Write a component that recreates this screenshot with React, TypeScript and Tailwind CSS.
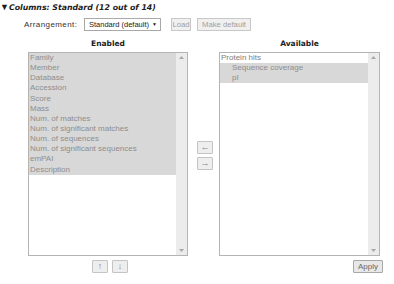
import React from "react";

const enabledItems = [
  "Family",
  "Member",
  "Database",
  "Accession",
  "Score",
  "Mass",
  "Num. of matches",
  "Num. of significant matches",
  "Num. of sequences",
  "Num. of significant sequences",
  "emPAI",
  "Description",
];

const arial = "font-['Liberation_Sans',Arial,sans-serif]";

const Scrollbar = () => (
  <div className="flex w-[11px] flex-col items-center justify-between bg-[#ececec] py-[3px]">
    <svg width="5" height="3" viewBox="0 0 5 3">
      <path d="M0 3 L2.5 0 L5 3 Z" fill="#a8a8a8" />
    </svg>
    <svg width="5" height="3" viewBox="0 0 5 3">
      <path d="M0 0 L2.5 3 L5 0 Z" fill="#a8a8a8" />
    </svg>
  </div>
);

const SmallButton = ({ children }: { children: React.ReactNode }) => (
  <button
    className={`flex h-[13px] w-[16px] items-center justify-center rounded-[1px] border border-[#c4c4c4] bg-[#eeeeee] text-[9px] leading-none text-[#8a8a8a] ${arial}`}
  >
    {children}
  </button>
);

export default function App() {
  return (
    <div className={`relative h-[284px] w-[394px] overflow-hidden bg-white ${arial}`}>
      {/* Title */}
      <div className="flex h-[14px] items-center pt-[1px] text-[#1c1c1c]">
        <span className="text-[9px] leading-none">▼</span>
        <span className="font-['DejaVu_Sans',Verdana,sans-serif] text-[7.8px] font-bold italic leading-none">
          Columns: Standard (12 out of 14)
        </span>
      </div>

      {/* Arrangement row */}
      <div className="mt-[4px] flex h-[13px] items-center pl-[24px]">
        <span className="w-[60px] text-[8px] tracking-[0.4px] text-[#333]">Arrangement:</span>
        <div className="flex h-[13px] w-[77px] items-center justify-between border border-[#a9a9a9] bg-white pl-[4px] pr-[3px] text-[7.5px] text-[#222]">
          <span>Standard (default)</span>
          <span className="text-[5px]">▼</span>
        </div>
        <button className="ml-[10px] flex h-[13px] w-[20px] items-center justify-center border border-[#c8c8c8] bg-[#f0f0f0] text-[7.7px] text-[#a0a0a0]">
          Load
        </button>
        <button className="ml-[6px] flex h-[13px] w-[54px] items-center justify-center border border-[#c8c8c8] bg-[#f0f0f0] text-[7.7px] text-[#a0a0a0]">
          Make default
        </button>
      </div>

      {/* Lists */}
      <div className="mt-[8px] flex pl-[28px]">
        {/* Enabled */}
        <div className="flex w-[160px] flex-col">
          <div className="flex h-[10px] items-center justify-center font-['DejaVu_Sans',Verdana,sans-serif] text-[7.5px] font-bold text-[#1c1c1c]">
            Enabled
          </div>
          <div className="mt-[3px] flex h-[204px] border border-[#b4b4b4] bg-white">
            <div className="flex-1">
              {enabledItems.map((item) => (
                <div
                  key={item}
                  className="flex h-[10.15px] items-center bg-[#d8d8d8] pl-[1px] text-[8px] leading-none text-[#8e8e8e]"
                >
                  {item}
                </div>
              ))}
            </div>
            <Scrollbar />
          </div>
          <div className="mt-[4px] flex gap-[4px] pl-[64px]">
            <SmallButton>↑</SmallButton>
            <SmallButton>↓</SmallButton>
          </div>
        </div>

        {/* Move buttons */}
        <div className="flex w-[31px] flex-col gap-[3px] pl-[9px] pt-[102px]">
          <SmallButton>←</SmallButton>
          <SmallButton>→</SmallButton>
        </div>

        {/* Available */}
        <div className="flex w-[161px] flex-col">
          <div className="flex h-[10px] items-center justify-center font-['DejaVu_Sans',Verdana,sans-serif] text-[7.5px] font-bold text-[#1c1c1c]">
            Available
          </div>
          <div className="mt-[3px] flex h-[204px] border border-[#b4b4b4] bg-white">
            <div className="flex-1">
              <div className="flex h-[10.15px] items-center pl-[1px] text-[8px] leading-none text-[#7e7e7e]">
                Protein hits
              </div>
              <div className="flex h-[10.15px] items-center bg-[#d8d8d8] pl-[12px] text-[8px] leading-none text-[#8e8e8e]">
                Sequence coverage
              </div>
              <div className="flex h-[10.15px] items-center bg-[#d8d8d8] pl-[12px] text-[8px] leading-none text-[#8e8e8e]">
                pI
              </div>
            </div>
            <Scrollbar />
          </div>
          <div className="mr-[-3px] mt-[4px] flex justify-end">
            <button className="flex h-[13px] w-[30px] items-center justify-center rounded-[1px] border border-[#a8a8a8] bg-[#e8e8e8] text-[8px] text-[#666]">
              Apply
            </button>
          </div>
        </div>
      </div>
    </div>
  );
}
